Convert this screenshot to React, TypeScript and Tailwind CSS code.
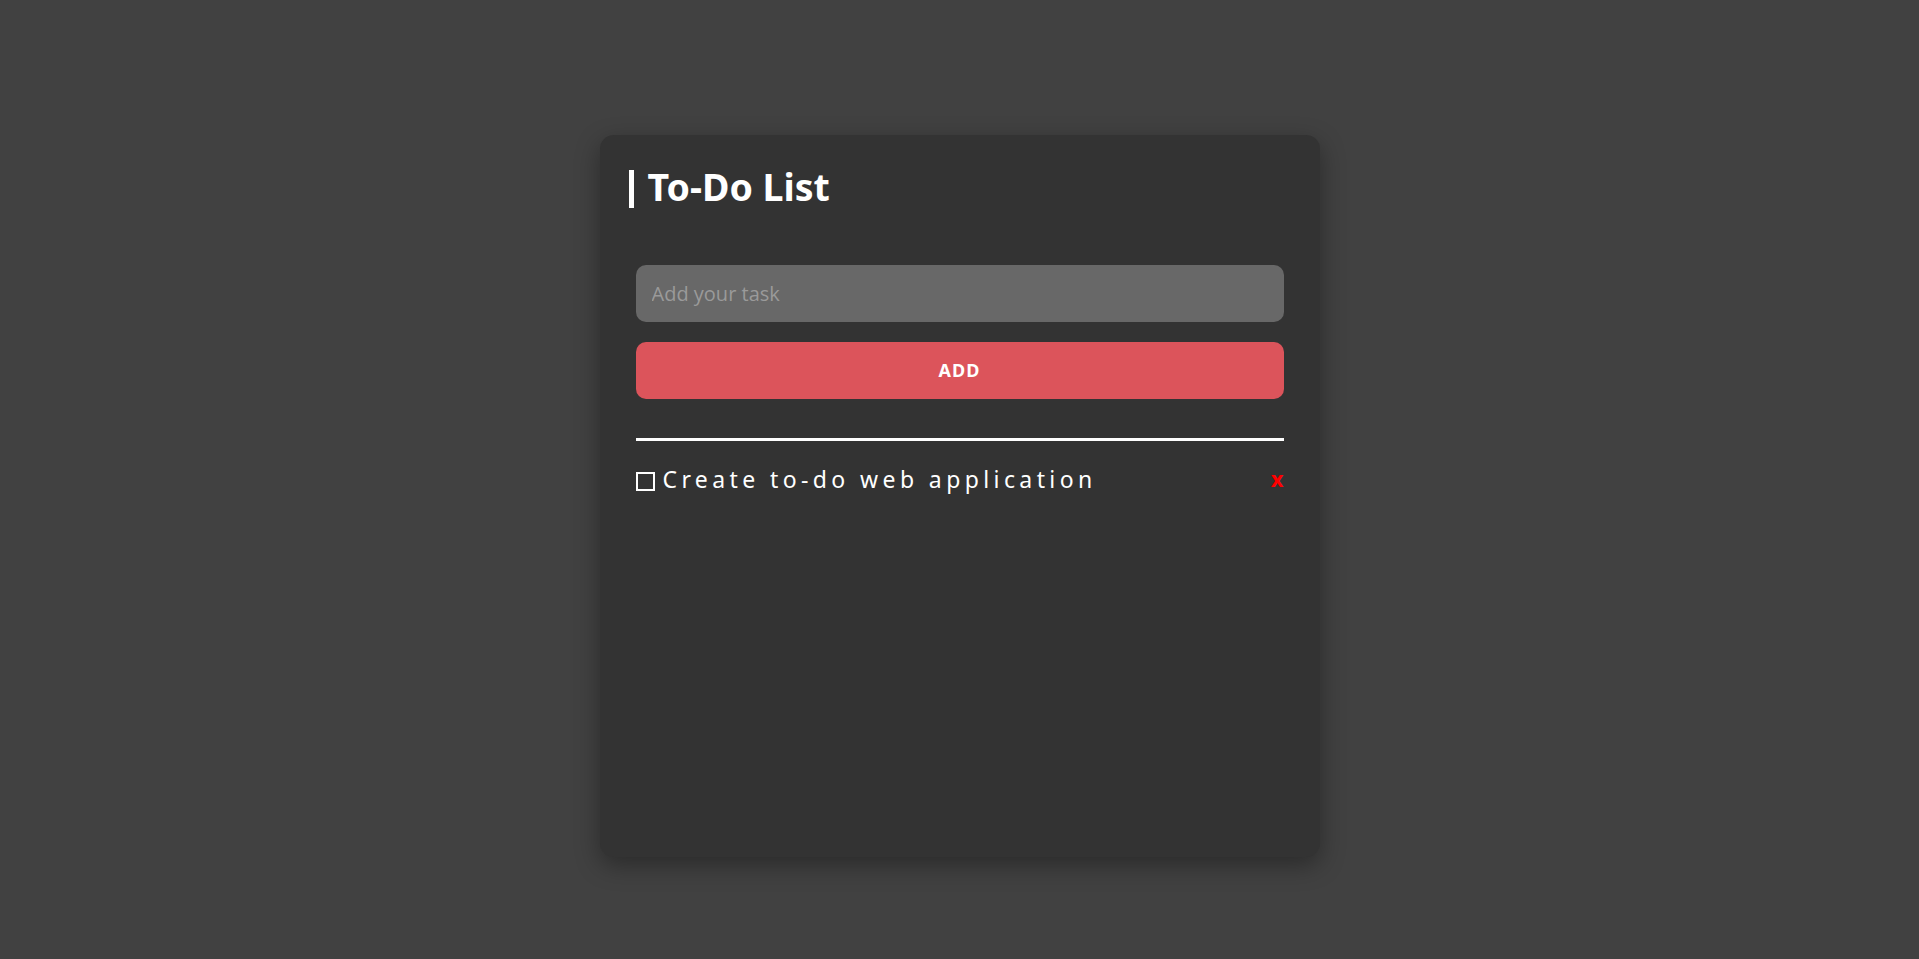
import React from "react";

export default function App() {
  return (
    <div className="min-h-[959px] w-full bg-[#414141] overflow-hidden">
      <div className="mx-auto mt-[135px] h-[722px] w-[720px] rounded-[14px] bg-[#333333] shadow-[0_8px_24px_rgba(0,0,0,0.35)]">
        <div className="pl-[29px] pt-[35px]">
          <h2
            className="border-l-[5px] border-white pb-[4px] pl-[14px] text-[37.5px] font-bold leading-[34px] text-white"
            style={{ fontFamily: '"Noto Sans", sans-serif' }}
          >
            To-Do List
          </h2>
        </div>
        <div className="mx-[36px] mt-[57px]">
          <input
            type="text"
            placeholder="Add your task"
            className="block h-[57px] w-full rounded-[10px] bg-[#686868] px-[16px] text-[20px] text-white placeholder:text-[#9a9a9a] outline-none"
            style={{ fontFamily: '"Open Sans", sans-serif' }}
          />
          <button
            className="mt-[20px] block h-[57px] w-full rounded-[10px] bg-[#dc545b] text-[18px] font-bold tracking-[1px] text-white"
            style={{ fontFamily: '"Noto Sans", sans-serif' }}
          >
            ADD
          </button>
          <div className="mt-[39px] h-[3px] w-full bg-white" />
          <div className="mt-[26px] flex items-center justify-between">
            <div className="flex items-center">
              <div className="mt-[4px] h-[19px] w-[19px] border-2 border-white" />
              <span
                className="ml-[8px] text-[23px] leading-[24px] tracking-[4.4px] text-white"
                style={{ fontFamily: '"Noto Sans", sans-serif' }}
              >
                Create to-do web application
              </span>
            </div>
            <span
              className="-mt-[2px] text-[22px] font-bold leading-[24px] text-[#ff0000]"
              style={{ fontFamily: '"Noto Sans", sans-serif' }}
            >
              x
            </span>
          </div>
        </div>
      </div>
    </div>
  );
}
